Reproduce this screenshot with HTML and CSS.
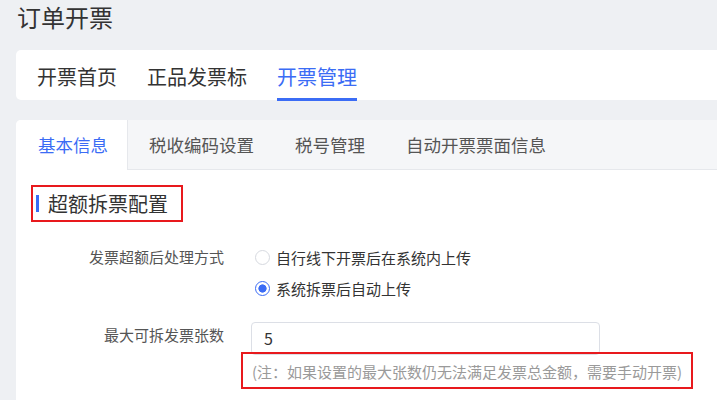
FILE: index.html
```html
<!DOCTYPE html>
<html lang="zh-CN">
<head>
<meta charset="utf-8">
<title>订单开票</title>
<link rel="stylesheet" href="styles.css">
</head>
<body>
<div class="page">
  <h1 class="page-title">订单开票</h1>
  <div class="card top-tabs">
    <div class="top-tab">开票首页</div>
    <div class="top-tab">正品发票标</div>
    <div class="top-tab active">开票管理</div>
  </div>
  <div class="card main">
    <div class="sub-tabs">
      <div class="sub-tab active">基本信息</div>
      <div class="sub-tab">税收编码设置</div>
      <div class="sub-tab">税号管理</div>
      <div class="sub-tab">自动开票票面信息</div>
    </div>
    <div class="body">
      <div class="section-title"><span class="bar"></span><span>超额拆票配置</span></div>
      <div class="form">
        <div class="row row-radio">
          <div class="label">发票超额后处理方式</div>
          <div class="radios">
            <div class="radio"><span class="dot"></span><span>自行线下开票后在系统内上传</span></div>
            <div class="radio checked"><span class="dot"></span><span>系统拆票后自动上传</span></div>
          </div>
        </div>
        <div class="row row-input">
          <div class="label">最大可拆发票张数</div>
          <div class="control">
            <div class="input">5</div>
            <div class="note"><span>(注：如果设置的最大张数仍无法满足发票总金额，需要手动开票)</span></div>
          </div>
        </div>
      </div>
    </div>
  </div>
</div>
</body>
</html>
```
FILE: styles.css
```css
* { box-sizing: border-box; }
html, body { margin: 0; padding: 0; }
body {
  background: #eef0f3;
  font-family: "Noto Sans CJK SC", "Noto Sans", sans-serif;
  color: #333;
  overflow: hidden;
}
.page { padding: 0 0 0 16px; }
.page-title {
  margin: 0;
  font-size: 24px;
  font-weight: 400;
  line-height: 33px;
  height: 33px;
  color: #333;
  padding-left: 1px;
}
.card { background: #fff; }
.top-tabs {
  margin-top: 17px;
  height: 50px;
  display: flex;
  gap: 30px;
  padding-left: 21px;
  border-radius: 5px 0 0 5px;
}
.top-tab {
  font-size: 20px;
  line-height: 24px;
  padding-top: 15px;
  height: 51px;
  color: #333;
}
.top-tab.active { color: #3b6cf5; border-bottom: 3px solid #3b6cf5; }
.main {
  margin-top: 20px;
  height: 300px;
  border-radius: 5px 0 0 0;
  overflow: hidden;
}
.sub-tabs {
  display: flex;
  height: 50px;
  background: #f5f6f8;
  border-bottom: 1px solid #e6e8ec;
}
.sub-tab {
  font-size: 17.5px;
  line-height: 49px;
  padding: 0 20px 0 21px;
  color: #555;
  white-space: nowrap;
}
.sub-tab.active {
  background: #fff;
  color: #3b6cf5;
  height: 50px;
  border-right: 1px solid #e6e8ec;
  padding: 0 19px 0 22px;
}
.body { padding: 15px 0 0 15px; }
.section-title {
  display: inline-flex;
  align-items: center;
  border: 2px solid #e8191d;
  height: 37px;
  width: 152px;
  padding-left: 3px;
  font-size: 20px;
  color: #333;
  gap: 9px;
}
.section-title .bar { width: 3px; height: 17px; background: #3b6cf5; flex: none; }
.form { margin-top: 22px; }
.row { display: flex; }
.label {
  width: 193px;
  flex: none;
  text-align: right;
  font-size: 15px;
  line-height: 26px;
  color: #555;
}
.row-input { margin-top: 21px; }
.radios { margin-left: 31px; display: flex; flex-direction: column; gap: 5px; }
.radio {
  display: flex;
  align-items: center;
  height: 26px;
  font-size: 15px;
  color: #333;
}
.radio .dot {
  flex: none;
  width: 15px; height: 15px;
  border: 1px solid #d6d9df;
  border-radius: 50%;
  margin-right: 6px;
  background: #fff;
}
.radio.checked .dot {
  border-color: #3b6cf5;
  background: radial-gradient(circle, #3b6cf5 0 3.8px, #fff 4.4px);
}
.control { margin-left: 27px; }
.input {
  width: 349px;
  height: 33px;
  border: 1px solid #dcdfe6;
  border-radius: 4px;
  font-size: 16px;
  line-height: 31px;
  padding-left: 12px;
  color: #333;
}
.note {
  margin-top: 7px;
  font-size: 15px;
  line-height: 20px;
  color: #9a9a9a;
  padding-left: 1px;
  white-space: nowrap;
}
.note span { position: relative; display: inline-block; }
.note span::after {
  content: "";
  position: absolute;
  left: -11px; right: -11px;
  top: -10px; bottom: -7px;
  border: 2px solid #e8191d;
}
```
